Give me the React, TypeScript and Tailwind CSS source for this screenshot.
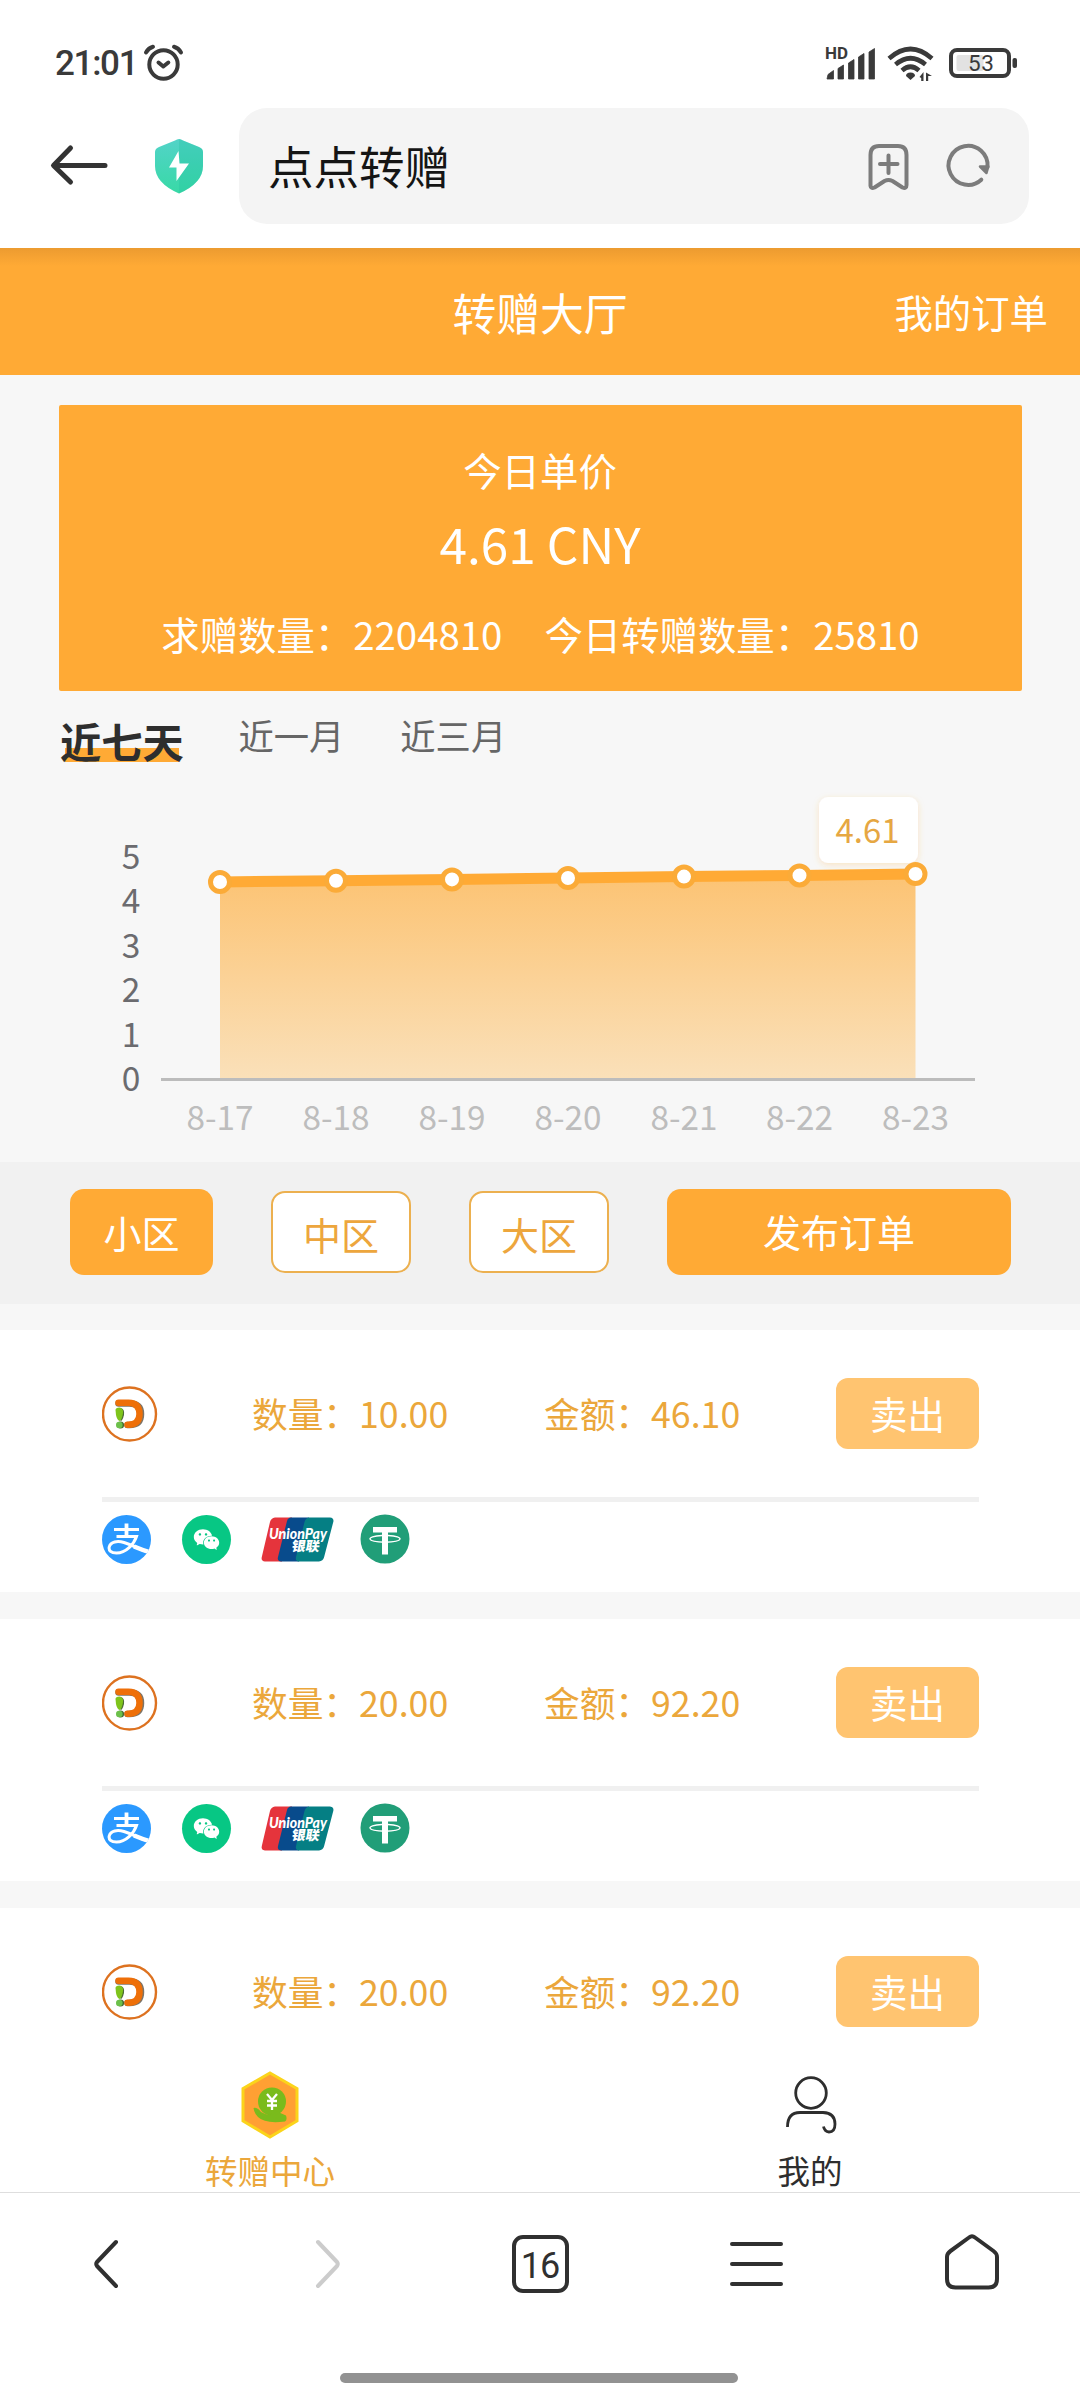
import React from "react";
import { AiFillWechat } from "react-icons/ai";

const days = ["8-17", "8-18", "8-19", "8-20", "8-21", "8-22", "8-23"];
const pointX = [220, 336, 452, 568, 684, 799.5, 915.5];
const pointY = [882, 880.7, 879.4, 878, 876.6, 875.4, 874];

const orders = [
  { qty: "10.00", total: "46.10", showPayments: true },
  { qty: "20.00", total: "92.20", showPayments: true },
  { qty: "20.00", total: "92.20", showPayments: false },
];

function StatusBar() {
  return (
    <div className="flex h-[108px] items-start justify-between pl-[55px] pr-[62px] text-[#3a3a3a]">
      <div className="flex items-start">
        <span className="mt-[45px] w-[87px] whitespace-nowrap font-['Roboto'] text-[35px] font-medium leading-[38px] tracking-[-1.3px]">21:01</span>
        <svg className="mt-[44px]" width="42" height="38" viewBox="0 0 42 38" fill="none" stroke="currentColor" strokeLinecap="round">
          <circle cx="21.5" cy="20.5" r="14.2" strokeWidth="4" />
          <path d="M4 8.5Q6.5 4 11 2.8M39 8.5Q36.500 4 32 2.8" strokeWidth="4" />
          <path d="M16.500 18.500L21.300 22.500L26.300 18.500" strokeWidth="4" strokeLinejoin="round" />
        </svg>
      </div>
      <svg className="mt-[34px] overflow-visible" width="194" height="50" viewBox="-1 -10 194 50" fill="currentColor">
        <text x="0" y="15" fontSize="16.500" fontWeight="700" fontFamily="Roboto" textLength="23" lengthAdjust="spacingAndGlyphs">HD</text>
        <path d="M3 30.500L8.500 26.500V35H2Z M13 24.500L18.500 21V35H13Z M23.500 19L29 15.500V35H23.500Z M33.500 13L39 9.500V35H33.500Z M44 8L49.500 4.500V35H44Z" stroke="currentColor" strokeWidth="0.8" strokeLinejoin="round" />
        <g fill="none" stroke="currentColor" strokeWidth="4.600">
          <path d="M64 14.500Q85.500 -4.500 107 14.500" />
          <path d="M70.500 20.500Q85.500 8 100.500 20.500" />
          <path d="M77 26.500Q85.500 19 94 26.500" />
        </g>
        <path d="M85.500 28.500A4.500 3.500 0 0 1 90 32L85.500 36L81 32A4.500 3.500 0 0 1 85.500 28.500Z" />
        <path d="M94.500 33L98.500 28V37H96.200V34Z M101 28.500V37H103.200V32H107Z" />
        <rect x="126" y="6" width="58" height="26" rx="6" fill="none" stroke="currentColor" strokeWidth="4" />
        <rect x="131.500" y="11" width="27" height="16" rx="2" fill="#e2e2e2" />
        <rect x="187.500" y="14" width="4.500" height="10" rx="2" />
        <text x="156" y="27.300" fontSize="22.500" fontFamily="Roboto" textAnchor="middle" textLength="26">53</text>
      </svg>
    </div>
  );
}

function AddressBar() {
  return (
    <div className="flex h-[140px] items-start">
      <svg className="ml-[48px] mt-[36px]" width="62" height="42" viewBox="0 0 62 42" fill="none" stroke="#333" strokeWidth="5" strokeLinecap="round" strokeLinejoin="round">
        <path d="M57 21.500H6M22.500 4L5.500 21.500L22.500 38" />
      </svg>
      <svg className="ml-[44px] mt-[30px]" width="50" height="56" viewBox="0 0 50 56">
        <defs>
          <linearGradient id="shield" x1="0" y1="0" x2="0" y2="1">
            <stop offset="0" stopColor="#52d3c8" />
            <stop offset="1" stopColor="#38d9a6" />
          </linearGradient>
        </defs>
        <path d="M25 1Q27 1 29 2.500L45 9Q49 10.500 49 14V28Q49 45 25 55.500Q1 45 1 28V14Q1 10.500 5 9L21 2.500Q23 1 25 1Z" fill="url(#shield)" />
        <path d="M25 1Q27 1 29 2.500L45 9Q49 10.500 49 14V28Q49 45 25 55.500Z" fill="#20bf9f" opacity="0.300" />
        <path d="M24.500 13L15 29.500H22.500V43L35 25.500H25.500Z" fill="#fff" />
      </svg>
      <div className="ml-[35px] flex h-[116px] w-[790px] items-center rounded-[28px] bg-[#f4f4f4] pl-[29px] pr-[37.500px]">
        <span className="flex-1 pb-[2px] text-[45.500px] leading-[60px] text-[#151515]">点点转赠</span>
        <svg className="mr-[30px]" width="48" height="50" viewBox="0 0 48 50" fill="none" stroke="#7c7c7c" strokeWidth="4" strokeLinecap="round" strokeLinejoin="round">
          <path d="M4.500 45V14Q4.500 5 13 5H32Q40.500 5 40.500 14V44Q40.500 48 36.500 46.500L26.500 40Q22.500 38 18.500 40L8.500 46.500Q4.500 48 4.500 44Z" />
          <path d="M22.500 14.500V32M14 23H31.500" />
        </svg>
        <svg width="48" height="48" viewBox="0 0 48 48" fill="none" stroke="#7c7c7c" strokeWidth="4" strokeLinecap="round">
          <path d="M37.300 37.700A19.500 19.500 0 1 1 43.500 25" />
          <path d="M36 24.500H44.300L42.500 31Z" fill="#7c7c7c" strokeWidth="2.500" strokeLinejoin="round" />
        </svg>
      </div>
    </div>
  );
}

function PriceCard() {
  return (
    <div className="mx-auto mt-[30px] flex h-[286px] w-[963px] flex-col items-center rounded-[2px] bg-[#ffaa35] text-white">
      <div className="mt-[39px] text-[38.400px] leading-[50px]">今日单价</div>
      <div className="mt-[19px] text-[49.500px] leading-[60px]">4.61 CNY</div>
      <div className="mt-[35px] flex gap-[42px] pl-[1px] text-[38.400px] leading-[50px]">
        <span>求赠数量：2204810</span>
        <span>今日转赠数量：25810</span>
      </div>
    </div>
  );
}

function RangeTabs() {
  return (
    <div className="flex h-[82px] items-start pl-[60px]">
      <div className="mt-[23px] bg-[linear-gradient(#ffaa35,#ffaa35)] bg-[length:114px_14px] bg-[position:5px_34px] bg-no-repeat text-[41.300px] font-bold leading-[52px] text-[#2e2e2e]">近七天</div>
      <div className="ml-[54.500px] mt-[21px] text-[35.300px] leading-[46px] text-[#666]">近一月</div>
      <div className="ml-[56px] mt-[21px] text-[35.300px] leading-[46px] text-[#666]">近三月</div>
    </div>
  );
}

function PriceChart() {
  const line = pointX.map((x, i) => `${x},${pointY[i]}`).join(" ");
  return (
    <svg width="1080" height="389" viewBox="0 773 1080 389">
      <defs>
        <linearGradient id="area" x1="0" y1="0" x2="0" y2="1">
          <stop offset="0" stopColor="#fcc373" />
          <stop offset="1" stopColor="#fae0b9" />
        </linearGradient>
        <filter id="tipShadow" x="-20%" y="-20%" width="140%" height="150%">
          <feDropShadow dx="0" dy="2" stdDeviation="3" floodColor="#ffaa35" floodOpacity="0.250" />
        </filter>
      </defs>
      <polygon points={`220,1078 ${line} 915.5,1078`} fill="url(#area)" />
      <path d="M161 1079.500H975" stroke="#bcbcbc" strokeWidth="3" />
      <polyline points={line} fill="none" stroke="#ffaa35" strokeWidth="11" />
      <rect x="819" y="797" width="99" height="66" rx="9" fill="#fff" filter="url(#tipShadow)" />
      <text x="867.500" y="843" fontSize="34" fill="#e6a742" textAnchor="middle" textLength="64" lengthAdjust="spacingAndGlyphs">4.61</text>
      {pointX.map((x, i) => (
        <circle key={x} cx={x} cy={pointY[i]} r="9.500" fill="#fff" stroke="#fbab38" strokeWidth="5" />
      ))}
      {[5, 4, 3, 2, 1, 0].map((n, i) => (
        <text key={n} x="131" y={869 + i * 44.4} fontSize="33.500" fill="#6b6b6f" textAnchor="middle">{n}</text>
      ))}
      {days.map((d, i) => (
        <text key={d} x={pointX[i]} y="1130" fontSize="33.500" fill="#bdbdbd" textAnchor="middle" textLength="67" lengthAdjust="spacingAndGlyphs">{d}</text>
      ))}
    </svg>
  );
}

function FilterBar() {
  return (
    <div className="flex h-[142px] items-center bg-[#f1f1f1] pb-[2px] pl-[70px] text-[38px]">
      <button className="flex h-[86px] w-[143px] items-center justify-center rounded-[14px] bg-[#ffaa35] leading-[50px] text-white">小区</button>
      <button className="ml-[58px] flex h-[82px] w-[140px] items-center justify-center rounded-[14px] border-2 border-[#ecb04f] bg-white pt-[4px] leading-[50px] text-[#eda63d]">中区</button>
      <button className="ml-[58px] flex h-[82px] w-[140px] items-center justify-center rounded-[14px] border-2 border-[#ecb04f] bg-white pt-[4px] leading-[50px] text-[#eda63d]">大区</button>
      <button className="ml-[58px] flex h-[86px] w-[344px] items-center justify-center rounded-[14px] bg-[#ffaa35] pb-[3px] leading-[50px] text-white">发布订单</button>
    </div>
  );
}

function CoinLogo() {
  return (
    <svg className="shrink-0" width="56" height="56" viewBox="0.5 0 56 56">
      <circle cx="28" cy="28" r="26.500" fill="#fff" stroke="#dd7220" strokeWidth="2.400" />
      <path d="M17 17.500H28Q39.500 17.500 39.500 28Q39.500 39 28 39H26" fill="none" stroke="#7c7468" strokeWidth="6.500" strokeLinecap="round" />
      <path d="M17 16.700H27Q38 17 38 28Q38 38.500 27 38.700H26" fill="none" stroke="#ee6f08" strokeWidth="6.500" strokeLinecap="round" />
      <path d="M19 22Q23.500 23 22.500 29Q21 35 19 35Z" fill="#4c6b35" />
      <path d="M14 24Q14 21.500 18 21.500Q22 22 21.500 27Q20.500 34 18 35Q15.500 34 14.500 29Z" fill="#7fc41c" />
      <circle cx="19" cy="39" r="3.600" fill="#45682f" />
      <circle cx="17.800" cy="39" r="3.300" fill="#6cc04a" />
    </svg>
  );
}

function Alipay() {
  return (
    <svg width="49" height="49" viewBox="0 0 49 49">
      <defs>
        <clipPath id="alipayDisc">
          <circle cx="24.500" cy="24.500" r="24.500" />
        </clipPath>
      </defs>
      <g clipPath="url(#alipayDisc)">
        <rect width="49" height="49" fill="#2b99ff" />
        <g fill="none" stroke="#fff" strokeWidth="3">
          <path d="M24.500 8.500V21.500" strokeWidth="3.800" />
          <path d="M12 14.500H37" />
          <path d="M14.500 21.500H34.500C32 29 24 38 14.500 38C9 38 6.500 35.500 7.200 32C8.500 26.500 15.500 25.500 22 27.500C30 30 38 34.500 50 38.500" />
          <path d="M32 31.500Q40 35 49 37.500" strokeWidth="4.500" />
        </g>
      </g>
    </svg>
  );
}

function UnionPay() {
  return (
    <svg className="ml-[30px] overflow-visible" width="73" height="45" viewBox="0 0 73 45">
      <path d="M14 .5H31L21 44.500H4Q-.2 44 .8 40L9 5Q10 1 14 .5Z" fill="#e5343c" />
      <path d="M30 .5H48L38 44.500H20Q16 44 17 40L26 4Q27 .8 30 .5Z" fill="#084b8c" />
      <path d="M48 .5H69Q73 1 72.400 4.500L63 40.500Q62 44 58 44.500H38Q34 44 35 40L43.500 5Q44.500 1 48 .5Z" fill="#057f84" />
      <text x="8" y="22" fontSize="14.500" fontWeight="900" fontStyle="italic" fill="#fff" textLength="58" lengthAdjust="spacingAndGlyphs" fontFamily="Lato">UnionPay</text>
      <text x="30.500" y="34" fontSize="13.500" fontWeight="900" fill="#fff" textLength="28" lengthAdjust="spacingAndGlyphs" transform="translate(5 0) skewX(-9)">银联</text>
    </svg>
  );
}

function Tether() {
  return (
    <svg className="ml-[26px]" width="50" height="50" viewBox="0 0 50 50">
      <circle cx="25" cy="25" r="24.500" fill="#219e78" />
      <path d="M13 13H37V18.500H28V40.500H22V18.500H13Z" fill="#fff" />
      <path d="M22 21.500C5 22.500 6 28 25 28.200C44 28 45 22.500 28 21.500" fill="none" stroke="#fff" strokeWidth="1.400" />
    </svg>
  );
}

function OrderCard({ qty, total, showPayments }: { qty: string; total: string; showPayments: boolean }) {
  return (
    <div className="mb-[27px] flex h-[262px] shrink-0 flex-col bg-white pl-[102px] pr-[101px]">
      <div className="flex h-[172px] shrink-0 items-center border-b-[5px] border-[#f0f0f0]">
        <CoinLogo />
        <span className="ml-[94px] w-[292px] whitespace-nowrap pb-[2px] text-[35.700px] leading-[46px] text-[#eba73b]">数量：{qty}</span>
        <span className="w-[292px] whitespace-nowrap pb-[2px] text-[35.700px] leading-[46px] text-[#eba73b]">金额：{total}</span>
        <button className="flex h-[71px] w-[143px] shrink-0 items-center justify-center rounded-[12px] bg-[#ffc470] pb-[2px] text-[37.500px] leading-[48px] text-white">卖出</button>
      </div>
      {showPayments && (
        <div className="mt-[12px] flex h-[50px] items-center">
          <Alipay />
          <div className="ml-[31px] flex size-[49px] items-center justify-center rounded-full bg-[#07c784]">
            <AiFillWechat className="size-[29px] text-white" />
          </div>
          <UnionPay />
          <Tether />
        </div>
      )}
    </div>
  );
}

function TabBar() {
  return (
    <div className="flex h-[132px] shrink-0 bg-white text-[32.500px] leading-[42px]">
      <div className="flex w-1/2 flex-col items-center text-[#eba73b]">
        <svg className="mt-[11px]" width="58" height="68" viewBox="0 0 58 68">
          <path d="M29 2L56 17.500V50L29 66L2 50V17.500Z" fill="#ffa033" stroke="#fbd41a" strokeWidth="3" />
          <circle cx="31" cy="30.500" r="14" fill="#7abb1c" />
          <path d="M12.500 37Q16 36 20 41Q27 45 30 43L31 40Q34 38.500 37 41L45 44.500Q46.500 49 44 50.500Q24 53 17 46Q13 42 12.500 37Z" fill="#7abb1c" />
          <path d="M26 23L31 29L36 23M31 29V39M26 30H36M26 34.500H36" fill="none" stroke="#fff" strokeWidth="2.300" />
        </svg>
        <span className="mt-[10px]">转赠中心</span>
      </div>
      <div className="flex w-1/2 flex-col items-center text-[#2e2e2e]">
        <svg className="mt-[15px]" width="56" height="64" viewBox="0 0 56 64" fill="none" stroke="#2e2e2e" strokeWidth="2.800">
          <circle cx="29" cy="18" r="15.300" />
          <path d="M5.500 52Q5.500 37.500 18 37.500H41Q53 38 53 49Q53 57 47 57Q42.500 56.500 41.500 51.500" />
        </svg>
        <span className="mt-[10px]">我的</span>
      </div>
    </div>
  );
}

function BrowserToolbar() {
  return (
    <div className="flex h-[208px] shrink-0 flex-col items-center border-t border-[#dedede] bg-white">
      <div className="mt-[39px] flex w-full items-center justify-between px-[76px]">
        <svg width="60" height="64" viewBox="0 0 60 64" fill="none" stroke="#303030" strokeWidth="4" strokeLinecap="round" strokeLinejoin="round">
          <path d="M40 10L21 30Q19.500 32 21 34L40 54" />
        </svg>
        <svg width="60" height="64" viewBox="0 0 60 64" fill="none" stroke="#ccc" strokeWidth="4" strokeLinecap="round" strokeLinejoin="round">
          <path d="M24 10L43 30Q44.500 32 43 34L24 54" />
        </svg>
        <div className="flex h-[58px] w-[57px] items-center justify-center rounded-[11px] border-4 border-[#303030] pt-[3px] font-['Roboto'] text-[36px] leading-none tracking-[-1px] text-[#303030]">16</div>
        <svg width="60" height="64" viewBox="0 0 60 64" stroke="#303030" strokeWidth="4" strokeLinecap="round">
          <path d="M6 12H55M6 32H55M6 52H55" />
        </svg>
        <svg width="60" height="64" viewBox="0 0 60 64" fill="none" stroke="#303030" strokeWidth="4" strokeLinejoin="round">
          <path d="M25 5.500Q28 3 31 5.500L49.500 19Q53 21.500 53 25V47Q53 55.500 44.500 55.500H11.500Q3 55.500 3 47V25Q3 21.500 6.500 19Z" />
        </svg>
      </div>
      <div className="mr-[2px] mt-[77px] h-[10px] w-[398px] rounded-full bg-[#929292]" />
    </div>
  );
}

export default function App() {
  return (
    <div className="flex h-[2400px] w-[1080px] flex-col overflow-hidden bg-white font-['Noto_Sans_CJK_SC',sans-serif]">
      <div className="shrink-0">
        <StatusBar />
        <AddressBar />
      </div>
      <main className="flex min-h-0 flex-1 flex-col overflow-hidden bg-[#f7f7f7]">
        <header className="grid h-[127px] shrink-0 grid-cols-[1fr_auto_1fr] items-center bg-[#ffaa35] bg-[linear-gradient(#ec9b30,#ffaa35)] bg-[length:100%_18px] bg-no-repeat text-white">
          <span />
          <h1 className="text-[43.800px] leading-[56px]">转赠大厅</h1>
          <span className="justify-self-end pb-[2px] pr-[32px] text-[38.400px] leading-[50px]">我的订单</span>
        </header>
        <div className="shrink-0">
          <PriceCard />
          <RangeTabs />
          <PriceChart />
          <FilterBar />
        </div>
        <div className="mt-[26px] flex min-h-0 flex-1 flex-col overflow-hidden">
          {orders.map((o, i) => (
            <OrderCard key={i} {...o} />
          ))}
        </div>
      </main>
      <TabBar />
      <BrowserToolbar />
    </div>
  );
}
